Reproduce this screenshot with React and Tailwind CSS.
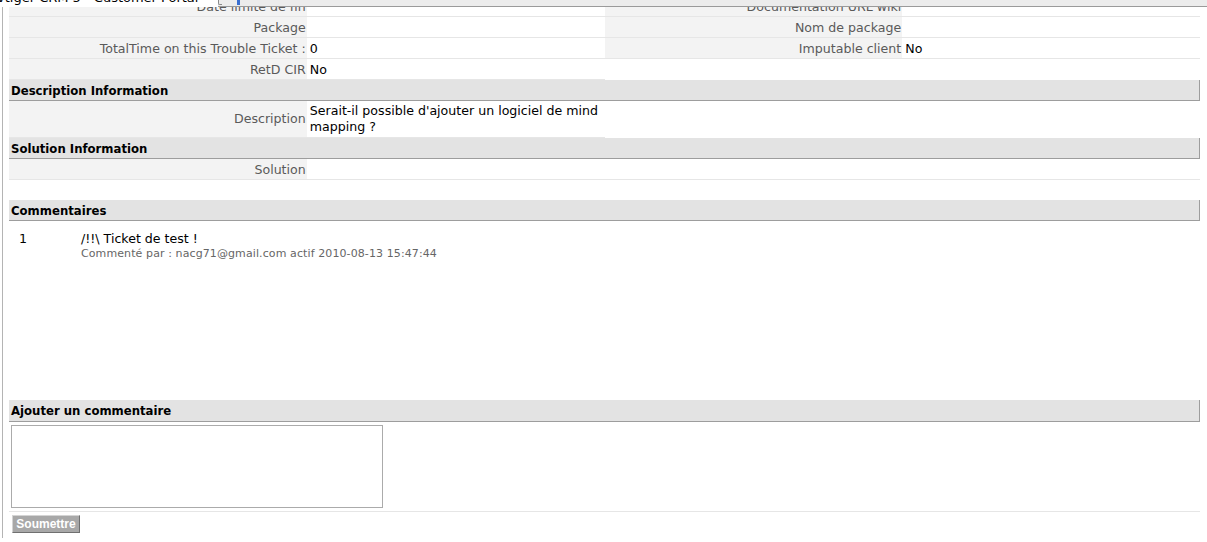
import React from "react";

const rows = [
  [
    ["Date limite de fin", ""],
    ["Documentation URL wiki", ""],
  ],
  [
    ["Package", ""],
    ["Nom de package", ""],
  ],
  [
    ["TotalTime on this Trouble Ticket :", "0"],
    ["Imputable client", "No"],
  ],
  [["RetD CIR", "No"]],
];

const Label = ({ children, className = "" }) => (
  <div
    className={`bg-[#f3f3f3] text-[#5a5a5a] text-right pr-[1px] border-b border-[#e6e6e6] whitespace-nowrap overflow-hidden ${className}`}
  >
    {children}
  </div>
);

const Value = ({ children, className = "" }) => (
  <div className={`pl-[3px] text-black border-b border-[#e6e6e6] ${className}`}>
    {children}
  </div>
);

const SectionHeader = ({ title, className = "" }) => (
  <div
    className={`h-[21px] bg-[#e3e3e3] border-b border-r border-[#9d9d9d] pl-[2px] pt-[2px] font-bold text-black text-[11.7px] leading-[18px] ${className}`}
  >
    {title}
  </div>
);

export default function App() {
  return (
    <div className="relative h-[542px] overflow-hidden bg-white font-['DejaVu_Sans',Verdana,sans-serif] text-[12.6px]">
      {/* browser strip sitting over the scrolled page */}
      <div className="absolute top-0 left-0 right-0 h-[7px] flex z-10">
        <div className="w-[218px] bg-white relative overflow-hidden">
          <span className="absolute left-[-3px] top-[-9px] text-[13px] leading-none whitespace-nowrap text-black">
            vtiger CRM 5 - Customer Portal
          </span>
        </div>
        <div className="flex-1 bg-[#ececec] border-b border-[#9a9a9a] relative">
          <span className="absolute left-0 top-0 w-[4px] h-[5px] border-l border-b border-[#8a8a8a] rounded-bl-[2px]" />
          <span className="absolute left-[19px] top-0 w-[3px] h-[5px] bg-[#3a6fd0]" />
        </div>
      </div>

      <div className="ml-[2px] border-l border-[#b4b4b4] pl-[6px] pr-[7px] h-full">
        <div className="-mt-[4px]">
          {rows.map((row, i) => (
            <div key={i} className="grid grid-cols-4 h-[21px] leading-[19px]">
              {row.map(([label, value]) => (
                <React.Fragment key={label}>
                  <Label className="pt-[1px]">{label}</Label>
                  <Value className="pt-[1px]">{value}</Value>
                </React.Fragment>
              ))}
            </div>
          ))}

          <SectionHeader title="Description Information" />
          <div className="grid grid-cols-4 h-[37px]">
            <Label className="flex items-center justify-end pt-[1px]">Description</Label>
            <Value className="leading-[16px] pt-[2px]">
              Serait-il possible d'ajouter un logiciel de mind mapping ?
            </Value>
          </div>

          <SectionHeader title="Solution Information" />
          <div className="grid grid-cols-4 h-[21px] leading-[19px]">
            <Label className="pt-[1px]">Solution</Label>
            <Value className="col-span-3"></Value>
          </div>

          <div className="h-[20px]" />

          <SectionHeader title="Commentaires" />
          <div className="h-[179px] pt-[10px]">
            <div className="flex">
              <div className="w-[72px] pl-[10px] leading-[16px]">1</div>
              <div>
                <div className="leading-[16px] text-black">/!!\ Ticket de test !</div>
                <div className="text-[11px] leading-[14px] text-[#666] tracking-[0.1px] whitespace-nowrap">
                  Commenté par : nacg71@gmail.com actif 2010-08-13 15:47:44
                </div>
              </div>
            </div>
          </div>

          <SectionHeader title="Ajouter un commentaire" className="h-[22px] leading-[19px]" />
          <div className="border-b border-[#e6e6e6] pt-[3px] pb-[3px] pl-[2px]">
            <textarea className="block w-[372px] h-[83px] border border-[#ababab] resize-none outline-none" />
          </div>
          <div className="pt-[3px] pl-[3px]">
            <button className="w-[68px] h-[18px] bg-[#a8a8a8] text-white font-bold text-[12px] leading-none font-['Liberation_Sans',Arial,sans-serif] border border-t-[#d4d4d4] border-l-[#d4d4d4] border-r-[#707070] border-b-[#707070]">
              Soumettre
            </button>
          </div>
        </div>
      </div>
    </div>
  );
}
